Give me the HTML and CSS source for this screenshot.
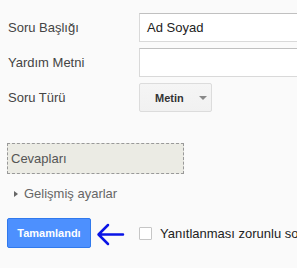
FILE: index.html
```html
<!DOCTYPE html>
<html>
<head>
<meta charset="utf-8">
<link rel="stylesheet" href="styles.css">
</head>
<body>
<div class="card">
  <div class="row">
    <div class="label">Soru Başlığı</div>
    <div class="input">Ad Soyad</div>
  </div>
  <div class="row">
    <div class="label">Yardım Metni</div>
    <div class="input"></div>
  </div>
  <div class="row">
    <div class="label">Soru Türü</div>
    <div class="select">Metin<span class="caret"></span></div>
  </div>
  <div class="answers">Cevapları</div>
  <div class="advanced"><span class="tri"></span>Gelişmiş ayarlar</div>
  <div class="actions">
    <div class="done">Tamamlandı</div>
    <svg class="arrow" width="30" height="24" viewBox="0 0 30 24">
      <path d="M27 11.5 L3 11.5 M12 2 L2.5 11.5 L12 21" fill="none" stroke="#0a14e6" stroke-width="2.5" stroke-linecap="round" stroke-linejoin="round"/>
    </svg>
    <span class="check"></span>
    <span class="req">Yanıtlanması zorunlu soru yap</span>
  </div>
</div>
</body>
</html>
```
FILE: styles.css
```css
html, body {
  margin: 0;
  padding: 0;
  background: #ffffff;
}
body {
  font-family: Arial, "Liberation Sans", sans-serif;
  font-size: 13px;
  color: #444;
}
.card {
  width: 297px;
  height: 268px;
  background: #fafafa;
  box-shadow: 0 1px 3px rgba(0,0,0,0.25);
  overflow: hidden;
  padding-top: 13px;
  box-sizing: border-box;
  white-space: nowrap;
}
.row {
  display: flex;
  align-items: center;
  height: 29px;
  margin-bottom: 6px;
}
.label {
  width: 131px;
  padding-left: 8px;
  flex: none;
  color: #444;
}
.input {
  flex: none;
  width: 200px;
  height: 29px;
  box-sizing: border-box;
  background: #fff;
  border: 1px solid #d9d9d9;
  border-top-color: #c0c0c0;
  padding-left: 7px;
  line-height: 27px;
  color: #222;
}
.select {
  flex: none;
  width: 73px;
  height: 29px;
  box-sizing: border-box;
  border: 1px solid #dcdcdc;
  border-radius: 2px;
  background: linear-gradient(#f5f5f5, #f1f1f1);
  font-size: 11px;
  font-weight: bold;
  color: #333;
  display: flex;
  align-items: center;
  padding-left: 15px;
}
.caret {
  margin-left: 15px;
  border-left: 4px solid transparent;
  border-right: 4px solid transparent;
  border-top: 4px solid #888;
  width: 0;
  height: 0;
}
.answers {
  margin: 31px 0 0 7px;
  width: 177px;
  height: 31px;
  box-sizing: border-box;
  background: #ebebe4;
  border: 1px dashed #999;
  line-height: 29px;
  padding-left: 3px;
  color: #555;
}
.advanced {
  margin: 12px 0 0 14px;
  height: 15px;
  display: flex;
  align-items: center;
  color: #666;
  font-size: 13px;
}
.tri {
  width: 0;
  height: 0;
  border-top: 3.5px solid transparent;
  border-bottom: 3.5px solid transparent;
  border-left: 4px solid #666;
  margin-right: 6px;
}
.actions {
  margin: 17px 0 0 7px;
  display: flex;
  align-items: center;
  height: 30px;
}
.done {
  flex: none;
  width: 84px;
  height: 30px;
  box-sizing: border-box;
  background: #4d90fe;
  border: 1px solid #3079ed;
  border-radius: 2px;
  color: #fff;
  font-size: 11px;
  font-weight: bold;
  display: flex;
  align-items: center;
  justify-content: center;
}
.arrow {
  flex: none;
  margin-left: 5px;
  margin-top: 3px;
}
.check {
  flex: none;
  width: 13px;
  height: 13px;
  box-sizing: border-box;
  border: 1px solid #c6c6c6;
  background: #fff;
  margin-left: 13px;
  border-radius: 1px;
}
.req {
  margin-left: 8px;
  color: #222;
  font-size: 13px;
}
```
